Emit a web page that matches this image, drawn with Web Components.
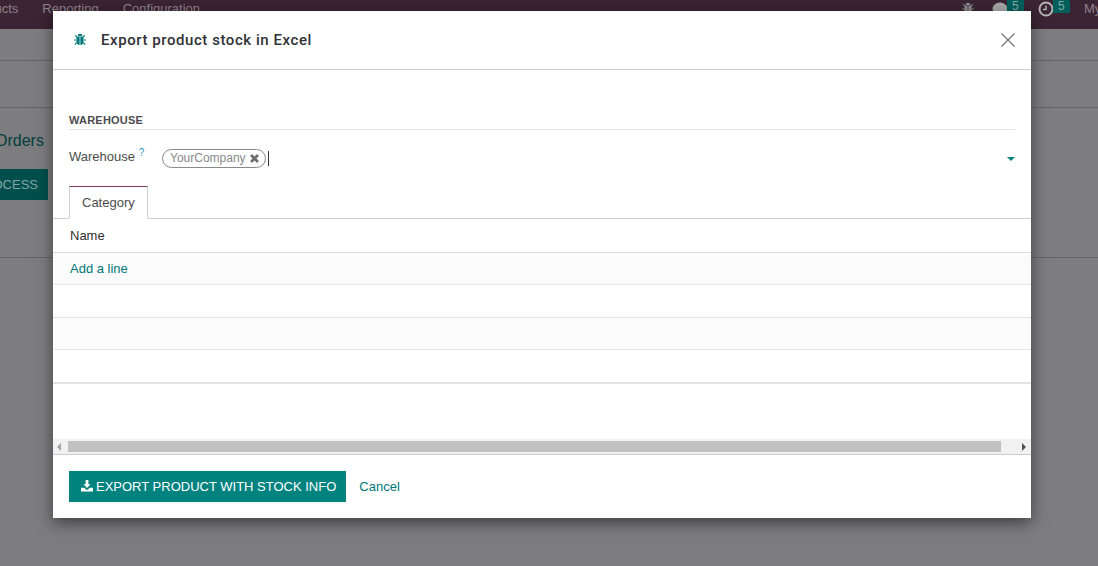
<!DOCTYPE html>
<html>
<head>
<meta charset="utf-8">
<title>Export product stock in Excel</title>
<style>
  html, body { margin: 0; height: 100%; overflow: hidden; }
  body { font-family: "Liberation Sans", Arial, sans-serif; font-size: 13px; color: #4c4c4c; background: #7d7d7f; }
</style>
</head>
<body>
<app-navbar></app-navbar>
<page-behind></page-behind>
<modal-dialog heading="Export product stock in Excel">
  <form-section heading="WAREHOUSE">
    <form-row label="Warehouse">
      <tag-input><tag-pill>YourCompany</tag-pill></tag-input>
    </form-row>
  </form-section>
  <tab-bar label="Category"></tab-bar>
  <line-list heading="Name" action="Add a line"></line-list>
  <list-scrollbar></list-scrollbar>
  <dialog-button slot="footer">EXPORT PRODUCT WITH STOCK INFO</dialog-button>
  <text-link slot="footer">Cancel</text-link>
</modal-dialog>

<script>
(function() {
    'use strict';

    var TEAL = '#00827f';
    var BUG = '<path d="M5.2 3.6a2.8 2.8 0 0 1 5.6 0z"/><path d="M4 4.4h3.6v9.4C5.4 13.6 4 12.2 4 10.4z"/><path d="M8.4 4.4H12v6c0 1.8-1.4 3.2-3.6 3.4z"/>' +
        '<path d="M4.6 4.6 2.6 2.8M11.4 4.6l2-1.8M3.6 8H1.2M12.4 8h2.4M4.2 11l-2 2.2M11.8 11l2 2.2" fill="none" stroke="currentColor" stroke-width="1.3"/>';

    function define(name, html, props) {
        var template = document.createElement('template');
        template.innerHTML = html;
        class Element extends HTMLElement {
            constructor() {
                super();
                this.attachShadow({ mode: 'open' });
                this.shadowRoot.appendChild(template.content.cloneNode(true));
            }
            connectedCallback() {
                var self = this;
                (props || []).forEach(function(prop) {
                    self.shadowRoot.querySelector('[data-' + prop + ']').textContent = self.getAttribute(prop) || '';
                });
            }
        }
        customElements.define(name, Element);
    }

    /* ---Page behind the backdrop--- */
    define('app-navbar', `
        <style>
          :host { display: flex; height: 29px; box-sizing: border-box; background: #3b2433; color: #8d818a; font-size: 13px; line-height: 16px; }
          .menu { display: flex; gap: 24px; margin-left: -33px; padding-top: 1px; }
          .tray { display: flex; margin-left: auto; margin-right: -14px; padding-top: 1px; }
          .icon { position: relative; display: block; color: #8f8f8f; }
          .badge { position: absolute; top: -1px; height: 13px; padding: 0 5px; box-sizing: border-box; background: #005f5b; color: #86a9a7; font-size: 12px; line-height: 12px; }
          svg { display: block; }
        </style>
        <div class="menu"><span>Products</span><span>Reporting</span><span>Configuration</span></div>
        <div class="tray">
          <span class="icon" style="width:31px;padding-top:1px"><svg width="14" height="14" viewBox="0 0 16 16" fill="currentColor">${BUG}</svg></span>
          <span class="icon" style="width:46px"><svg width="16" height="16" viewBox="0 0 16 16" fill="#a6a6a6"><ellipse cx="8" cy="8" rx="7.500" ry="6.500"/></svg><span class="badge" style="left:15px">5</span></span>
          <span class="icon" style="width:46px"><svg width="16" height="16" viewBox="0 0 16 16" fill="none" stroke="#b4b4b4" stroke-width="2"><circle cx="8" cy="8" r="6.500"/><path d="M8 4.500V8.500H5" stroke-width="1.400"/></svg><span class="badge" style="left:15px">5</span></span>
          <span style="width:28px">My</span>
        </div>`);

    define('page-behind', `
        <style>
          :host { display: block; }
          .bar { height: 31px; border-bottom: 1px solid #666667; }
          .panel { height: 46px; border-bottom: 1px solid #666667; }
          .sheet { height: 150px; border-bottom: 1px solid #666667; padding-top: 23px; box-sizing: border-box; overflow: hidden; }
          .title { margin-left: -5px; color: #003e3c; font-size: 16px; line-height: 19px; }
          .button { display: block; margin-top: 19px; width: 48px; height: 31px; background: #004f4c; color: #7fa5a4; line-height: 31px; padding-right: 10px; box-sizing: border-box; white-space: nowrap; direction: rtl; overflow: hidden; }
        </style>
        <div class="bar"></div>
        <div class="panel"></div>
        <div class="sheet">
          <div class="title">Orders</div>
          <div class="button">PROCESS</div>
        </div>`);

    /* ---Dialog--- */
    define('modal-dialog', `
        <style>
          :host { position: absolute; left: 53px; top: 11px; width: 978px; height: 507px; display: flex; flex-direction: column; background: #fff; box-shadow: 0 5px 15px rgba(0,0,0,.5); color: #4c4c4c; }
          header { flex: none; height: 59px; box-sizing: border-box; display: flex; align-items: center; padding-left: 20px; border-bottom: 1px solid #cfcfcf; }
          header svg { color: #00797a; flex: none; }
          header .bug { margin-top: -1px; }
          h4 { margin: 0 0 0 14px; font: 500 15px/20px Roboto, "Noto Sans", sans-serif; color: #303236; letter-spacing: .56px; }
          .close { margin-left: auto; margin-right: 15px; display: block; }
          main { flex: 1; min-height: 0; display: flex; flex-direction: column; }
          footer { flex: none; height: 64px; box-sizing: border-box; display: flex; align-items: center; padding: 0 16px 0; gap: 13px; border-top: 1px solid #cccbd4; }
        </style>
        <header>
          <svg class="bug" width="14" height="14" viewBox="0 0 16 16" fill="currentColor">${BUG}</svg>
          <h4 data-heading></h4>
          <svg class="close" width="16" height="16" viewBox="0 0 16 16" fill="none" stroke="#7c7c7c" stroke-width="1.400"><path d="M1.500 1.500l13 13M14.500 1.500l-13 13"/></svg>
        </header>
        <main><slot></slot></main>
        <footer><slot name="footer"></slot></footer>`, ['heading']);

    define('form-section', `
        <style>
          :host { display: block; padding: 0 16px; margin-top: 43px; }
          h5 { margin: 0; height: 16px; font: bold 11px/15px "Liberation Sans", Arial, sans-serif; letter-spacing: .22px; color: #4c4c50; border-bottom: 1px solid #e3e3e3; }
        </style>
        <h5 data-heading></h5>
        <slot></slot>`, ['heading']);

    define('form-row', `
        <style>
          :host { display: flex; align-items: flex-start; margin-top: 19px; height: 37px; }
          label { width: 93px; flex: none; color: #4c4c4c; line-height: 16px; }
          sup { color: #2a9fc4; font-size: 10px; line-height: 0; vertical-align: 5px; }
          .field { flex: 1; min-width: 0; }
        </style>
        <label><span data-label></span> <sup>?</sup></label>
        <div class="field"><slot></slot></div>`, ['label']);

    define('tag-input', `
        <style>
          :host { display: flex; align-items: center; height: 19px; position: relative; }
          .caret { width: 1px; height: 15px; background: #333; margin-left: 2px; }
          .arrow { margin-left: auto; width: 0; height: 0; border-top: 4px solid #00827f; border-left: 4px solid transparent; border-right: 4px solid transparent; }
        </style>
        <slot></slot><span class="caret"></span><span class="arrow"></span>`);

    define('tag-pill', `
        <style>
          :host { display: inline-flex; align-items: center; height: 19px; box-sizing: border-box; border: 1px solid #8a8a8a; border-radius: 10px; padding: 0 6px 0 7px; color: #8a8a8a; font-size: 12px; line-height: 17px; }
          svg { margin-left: 4px; display: block; }
        </style>
        <slot></slot>
        <svg width="9" height="9" viewBox="0 0 9 9" stroke="#6f6f6f" stroke-width="2.700" fill="none"><path d="M1 1l7 7M8 1L1 8"/></svg>`);

    define('tab-bar', `
        <style>
          :host { display: block; height: 33px; box-sizing: border-box; padding-left: 16px; border-bottom: 1px solid #cfd0d3; }
          .tab { display: inline-block; height: 33px; box-sizing: border-box; padding: 0 12px; border: 1px solid #cfd0d3; border-top-color: #7c3b63; border-bottom-color: #fff; background: #fff; color: #4c4c4c; line-height: 31px; }
        </style>
        <span class="tab" data-label></span>`, ['label']);

    define('line-list', `
        <style>
          :host { display: block; box-sizing: border-box; }
          .row { height: 32.400px; box-sizing: border-box; border-bottom: 1px solid #e5e5e5; padding-left: 17px; line-height: 32px; background: #fff; }
          .row.alt { background: #fbfbfb; }
          .head { height: 34px; line-height: 33px; color: #303030; border-bottom: 1px solid #dedede; }
          .add { color: #00777a; }
          .row.last { border-bottom: 2px solid #e2e2e6; height: 33.800px; }
        </style>
        <div class="row head" data-heading></div>
        <div class="row alt"><span class="add" data-action></span></div>
        <div class="row"></div>
        <div class="row alt"></div>
        <div class="row last"></div>`, ['heading', 'action']);

    define('list-scrollbar', `
        <style>
          :host { display: flex; align-items: center; height: 15px; margin-top: auto; background: #f1f1f1; box-sizing: border-box; }
          .thumb { height: 11px; flex: 1; background: #c1c1c1; margin-left: 15px; margin-right: 30px; }
          .left, .right { width: 0; height: 0; border-top: 4px solid transparent; border-bottom: 4px solid transparent; position: absolute; }
          .left { left: 4px; border-right: 4px solid #a3a3a3; }
          .right { right: 5px; border-left: 4px solid #505050; }
          .wrap { display: flex; flex: 1; position: relative; align-items: center; height: 100%; }
        </style>
        <div class="wrap"><span class="left"></span><span class="thumb"></span><span class="right"></span></div>`);

    define('dialog-button', `
        <style>
          :host { display: inline-flex; align-items: center; height: 31px; box-sizing: border-box; padding: 0 10px 0 12px; background: ${TEAL}; color: #fff; font-size: 13px; white-space: nowrap; }
          svg { display: block; margin: -1px 3px 0 0; }
        </style>
        <svg width="12" height="12" viewBox="0 0 13 13" fill="#fff"><path d="M5 0h3v4.500h2.400L6.500 8.600 2.600 4.500H5z"/><path d="M0 8.400h3.600l1.600 1.700a1.800 1.800 0 0 0 2.600 0l1.600-1.700H13V12.500H0z"/></svg>
        <slot></slot>`);

    define('text-link', `
        <style>
          :host { color: #00777a; font-size: 13px; }
        </style>
        <slot></slot>`);
})();
</script>
</body>
</html>
